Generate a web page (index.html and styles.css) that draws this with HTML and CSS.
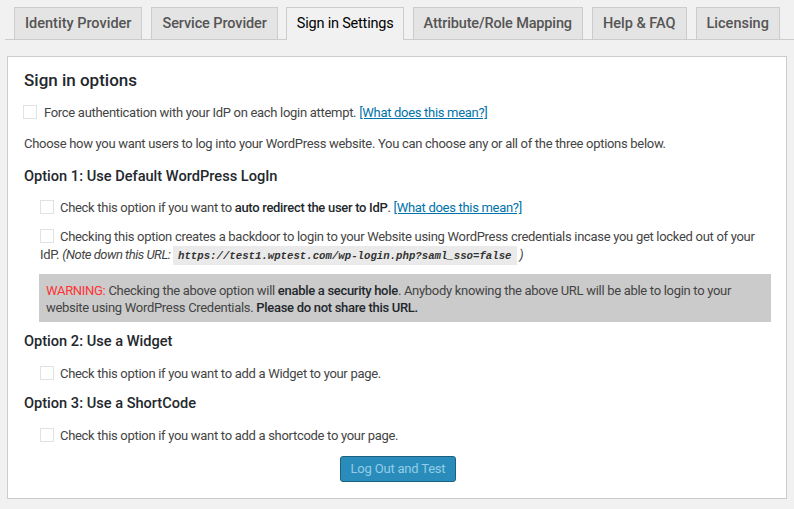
FILE: index.html
```html
<!DOCTYPE html>
<html>
<head>
<meta charset="utf-8">
<link rel="stylesheet" href="styles.css">
</head>
<body>
<div class="wrap">
  <nav class="tabs">
    <a class="tab">Identity Provider</a>
    <a class="tab tab-svc">Service Provider</a>
    <a class="tab active">Sign in Settings</a>
    <a class="tab tab-attr">Attribute/Role Mapping</a>
    <a class="tab">Help &amp; FAQ</a>
    <a class="tab">Licensing</a>
  </nav>
  <div class="panel">
    <h3 class="title">Sign in options</h3>
    <p class="row first"><span class="cb cb-first"></span>Force authentication with your IdP on each login attempt. <a class="link">[What does this mean?]</a></p>
    <p class="row choose">Choose how you want users to log into your WordPress website. You can choose any or all of the three options below.</p>

    <h4 class="opt opt1">Option 1: Use Default WordPress LogIn</h4>
    <p class="row ind r1"><span class="cb"></span>Check this option if you want to <b>auto redirect the user to IdP</b>. <a class="link">[What does this mean?]</a></p>
    <p class="row ind r2"><span class="cb"></span>Checking this option creates a backdoor to login to your Website using WordPress credentials incase you get locked out of your IdP. <i>(Note down this URL: <code>https://test1.wptest.com/wp-login.php?saml_sso=false</code> )</i></p>
    <div class="warn"><span class="red">WARNING:</span> Checking the above option will <b>enable a security hole</b>. Anybody knowing the above URL will be able to login to your website using WordPress Credentials. <b>Please do not share this URL.</b></div>

    <h4 class="opt opt2">Option 2: Use a Widget</h4>
    <p class="row ind r3"><span class="cb"></span>Check this option if you want to add a Widget to your page.</p>

    <h4 class="opt opt3">Option 3: Use a ShortCode</h4>
    <p class="row ind r4"><span class="cb"></span>Check this option if you want to add a shortcode to your page.</p>

    <div class="actions"><button class="btn" type="button">Log Out and Test</button></div>
  </div>
</div>
</body>
</html>
```

FILE: styles.css
```css
html, body {
  margin: 0;
  padding: 0;
  background: #f1f1f1;
}
body {
  font-family: Roboto, "Open Sans", "Liberation Sans", sans-serif;
  font-size: 13px;
  color: #444;
}
.wrap {
  padding-top: 7px;
}
.tabs {
  display: flex;
  align-items: flex-end;
  margin-left: 5px;
  padding-left: 9px;
  border-bottom: 1px solid #ccc;
  height: 32px;
}
.tab {
  display: block;
  margin-right: 9px;
  padding: 5px 10px;
  line-height: 21px;
  font-size: 14.5px;
  font-weight: 500;
  color: #555;
  background: #e4e4e4;
  border: 1px solid #ccc;
  border-bottom: none;
  white-space: nowrap;
}
.tab-svc {
  margin-right: 8px;
  letter-spacing: -0.1px;
}
.tab-attr {
  letter-spacing: -0.15px;
}
.tab.active {
  background: #f1f1f1;
  color: #000;
  font-weight: 400;
  padding: 5px 9px 6px 10px;
  margin-bottom: -1px;
  letter-spacing: -0.2px;
}
.panel {
  margin: 16px 0 0 7px;
  width: 780px;
  box-sizing: border-box;
  height: 443px;
  background: #fff;
  border: 1px solid #ccc;
  padding: 0 15px 0 16px;
  overflow: hidden;
}
.title {
  margin: 11px 0 0;
  font-size: 17px;
  line-height: 24px;
  font-weight: 500;
  color: #23282d;
}
.opt {
  margin: 0;
  font-size: 14.6px;
  line-height: 20px;
  font-weight: 500;
  color: #23282d;
}
.row {
  margin: 0;
  line-height: 18px;
  letter-spacing: -0.3px;
}
.first { margin-top: 12px; }
.choose { margin-top: 13px; }
.opt1 { margin-top: 13px; }
.r1 { margin-top: 13px; }
.r2 { margin-top: 11px; }
.opt2 { margin-top: 9px; }
.r3 { margin-top: 14px; }
.opt3 { margin-top: 10px; }
.r4 { margin-top: 14px; }
.ind {
  padding-left: 16px;
}
b {
  font-weight: 500;
  color: #23282d;
}
.cb {
  display: inline-block;
  width: 14px;
  height: 14px;
  box-sizing: border-box;
  border: 1px solid #e2e2e2;
  background: #fff;
  vertical-align: -2px;
  margin-right: 6px;
}
.cb-first {
  margin-left: -1px;
  margin-right: 7px;
}
.link {
  color: #0073aa;
  text-decoration: underline;
}
i {
  font-style: italic;
  letter-spacing: -0.5px;
}
code {
  font-family: "Liberation Mono", "DejaVu Sans Mono", monospace;
  font-size: 10.7px;
  letter-spacing: 0;
  font-weight: bold;
  font-style: italic;
  background: #eaeaea;
  color: #333;
  padding: 4px 5px 3px;
  margin: 0;
}
.warn {
  margin: 9px 0 0 15px;
  background: #cbcbcb;
  padding: 8px 7px 6px;
  line-height: 17px;
  letter-spacing: -0.3px;
}
.red {
  color: #f33;
}
.actions {
  margin-top: 11px;
  display: flex;
  justify-content: center;
}
.btn {
  height: 26px;
  padding: 0 10px;
  font-family: Roboto, "Open Sans", "Liberation Sans", sans-serif;
  font-size: 13px;
  line-height: 24px;
  letter-spacing: -0.2px;
  color: #94cde7;
  background: #298cba;
  border: 1px solid #1b607f;
  border-radius: 3px;
  margin-left: 1px;
}
```
